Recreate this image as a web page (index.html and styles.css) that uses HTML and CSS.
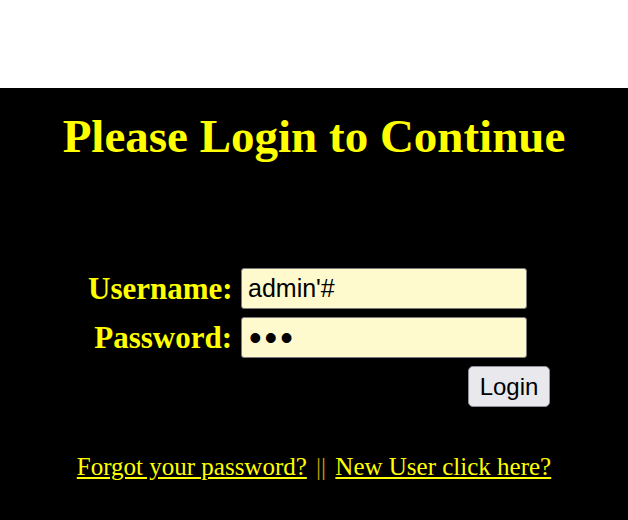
FILE: index.html
```html
<!DOCTYPE html>
<html lang="en">
<head>
    <meta charset="UTF-8">
    <title>Login</title>
    <link rel="stylesheet" href="styles.css">
</head>
<body>
    <div class="top-band"></div>

    <div class="login-area">
        <h1 class="title">Please Login to Continue</h1>

        <form class="login-form" action="#" method="post">
            <label for="username" class="form-label">Username:</label>
            <input type="text" id="username" name="username" class="form-input" value="admin'#">
            <span></span>

            <label for="password" class="form-label">Password:</label>
            <input type="password" id="password" name="password" class="form-input pass-input" value="abc">
            <span></span>

            <button type="submit" class="login-button">Login</button>
        </form>

        <div class="links">
            <a href="#" class="link">Forgot your password?</a>
            <span class="sep">||</span>
            <a href="#" class="link">New User click here?</a>
        </div>
    </div>
</body>
</html>
```

FILE: styles.css
```css
* {
    margin: 0;
    padding: 0;
    box-sizing: border-box;
}

body {
    font-family: 'Liberation Serif', 'Times New Roman', serif;
    background: #000;
    min-height: 100vh;
}

.top-band {
    height: 88px;
    background: #fff;
}

.login-area {
    background: #000;
    padding-top: 21px;
    min-height: 432px;
}

.title {
    color: #ffff00;
    font-size: 47px;
    line-height: 54px;
    font-weight: bold;
    text-align: center;
}

/* 表单 */
.login-form {
    display: grid;
    grid-template-columns: 144px 286px 14px;
    column-gap: 9px;
    row-gap: 8px;
    justify-content: center;
    align-items: center;
    padding-left: 10px;
    margin-top: 105px;
}

.form-label {
    color: #ffff00;
    font-size: 31px;
    font-weight: bold;
    text-align: right;
    white-space: nowrap;
}

.form-input {
    height: 41px;
    padding: 0 6px;
    background: #fffacd;
    border: 1px solid #7a7a7a;
    border-radius: 3px;
    font-family: 'Liberation Sans', Arial, sans-serif;
    font-size: 25px;
    color: #000;
}

.pass-input {
    font-size: 36px;
    letter-spacing: 3px;
    padding-left: 7px;
}

.form-input:focus {
    outline: none;
}

.login-button {
    grid-column: 2 / 4;
    justify-self: end;
    width: 82px;
    height: 41px;
    background: #e9e9ed;
    border: 1px solid #8f8f9d;
    border-radius: 5px;
    font-family: 'Liberation Sans', Arial, sans-serif;
    font-size: 24px;
    color: #000;
    cursor: pointer;
}

.links {
    margin-top: 45px;
    text-align: center;
    font-size: 25px;
    line-height: 29px;
}

.link {
    color: #ffff00;
    text-decoration: underline;
}

.sep {
    color: #c8a000;
    margin: 0 3px;
}
```
